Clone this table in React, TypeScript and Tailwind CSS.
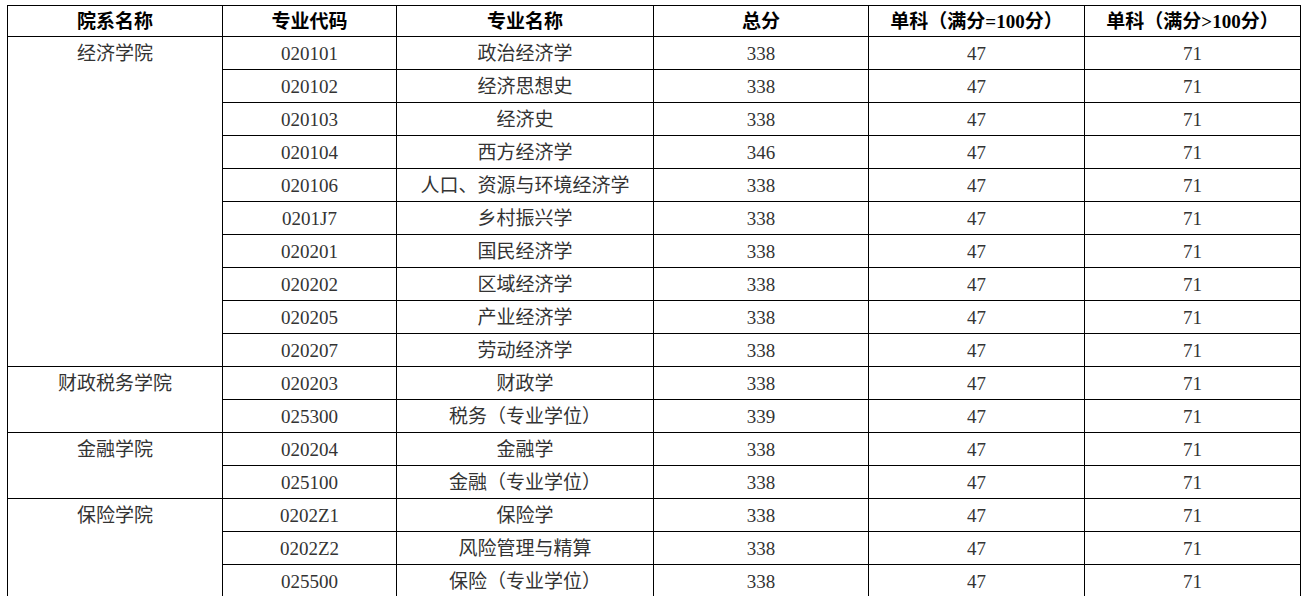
import React from "react";

type Row = [string, string, string];

const groups: { name: string; rows: Row[] }[] = [
  {
    name: "经济学院",
    rows: [
      ["020101", "政治经济学", "338"],
      ["020102", "经济思想史", "338"],
      ["020103", "经济史", "338"],
      ["020104", "西方经济学", "346"],
      ["020106", "人口、资源与环境经济学", "338"],
      ["0201J7", "乡村振兴学", "338"],
      ["020201", "国民经济学", "338"],
      ["020202", "区域经济学", "338"],
      ["020205", "产业经济学", "338"],
      ["020207", "劳动经济学", "338"],
    ],
  },
  {
    name: "财政税务学院",
    rows: [
      ["020203", "财政学", "338"],
      ["025300", "税务（专业学位）", "339"],
    ],
  },
  {
    name: "金融学院",
    rows: [
      ["020204", "金融学", "338"],
      ["025100", "金融（专业学位）", "338"],
    ],
  },
  {
    name: "保险学院",
    rows: [
      ["0202Z1", "保险学", "338"],
      ["0202Z2", "风险管理与精算", "338"],
      ["025500", "保险（专业学位）", "338"],
    ],
  },
];

const font = {
  fontFamily: '"Liberation Serif", "Noto Sans CJK SC", serif',
};

function Cell({ w, children, bold }: { w: string; children: React.ReactNode; bold?: boolean }) {
  return (
    <div
      className={`${w} shrink-0 flex items-center justify-center border-r border-black whitespace-nowrap ${
        bold ? "font-bold text-black" : "text-[#333333]"
      }`}
    >
      {children}
    </div>
  );
}

export default function App() {
  return (
    <div className="min-h-screen w-full bg-white overflow-hidden">
      <div
        className="ml-[7px] mt-[5px] w-[1294px] border-l border-t border-black text-[19px] leading-none"
        style={font}
      >
        {/* header */}
        <div className="flex h-[31px] border-b border-black">
          <Cell w="w-[215px]" bold>院系名称</Cell>
          <Cell w="w-[174px]" bold>专业代码</Cell>
          <Cell w="w-[257px]" bold>专业名称</Cell>
          <Cell w="w-[215px]" bold>总分</Cell>
          <Cell w="w-[216px]" bold>单科（满分=100分）</Cell>
          <Cell w="w-[216px]" bold>单科（满分&gt;100分）</Cell>
        </div>
        {groups.map((g) => (
          <div key={g.name} className="flex border-b border-black">
            <div className="w-[215px] shrink-0 border-r border-black text-[#333333] flex justify-center">
              <div className="h-[32px] flex items-center whitespace-nowrap">{g.name}</div>
            </div>
            <div className="flex flex-col">
              {g.rows.map((r, i) => (
                <div
                  key={r[0]}
                  className={
                    i < g.rows.length - 1
                      ? "flex h-[33px] border-b border-black"
                      : "flex h-[32px]"
                  }
                >
                  <Cell w="w-[174px]">{r[0]}</Cell>
                  <Cell w="w-[257px]">{r[1]}</Cell>
                  <Cell w="w-[215px]">{r[2]}</Cell>
                  <Cell w="w-[216px]">47</Cell>
                  <Cell w="w-[216px]">71</Cell>
                </div>
              ))}
            </div>
          </div>
        ))}
      </div>
    </div>
  );
}
